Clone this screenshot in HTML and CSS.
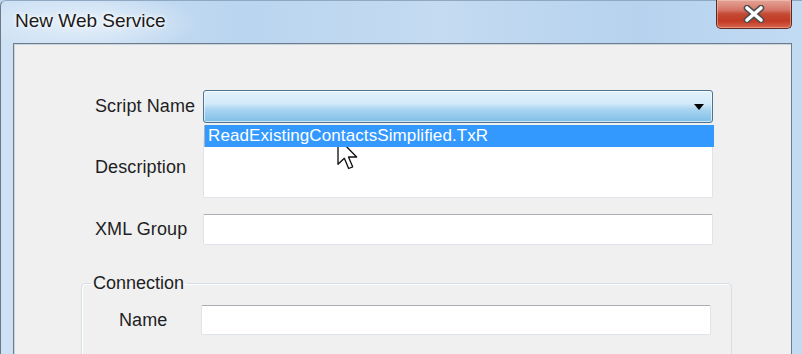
FILE: index.html
```html
<!DOCTYPE html>
<html lang="en">
<head>
    <meta charset="UTF-8">
    <title>New Web Service</title>
    <link rel="stylesheet" href="styles.css">
</head>
<body>
    <div class="window">
        <div class="titlebar">
            <span class="title">New Web Service</span>
            <div class="close-button">
                <svg width="24" height="18" viewBox="0 0 24 18">
                    <path d="M5 3 L19 15 M19 3 L5 15" stroke="#4d4d4d" stroke-width="6.5" stroke-linecap="round"/>
                    <path d="M5 3 L19 15 M19 3 L5 15" stroke="#ffffff" stroke-width="3.6" stroke-linecap="round"/>
                </svg>
            </div>
        </div>

        <div class="client">
            <div class="form">
                <div class="row row-combo">
                    <label>Script Name</label>
                    <div class="combo">
                        <span class="combo-arrow"></span>
                        <!-- open dropdown list -->
                        <ul class="dropdown">
                            <li class="selected">ReadExistingContactsSimplified.TxR</li>
                        </ul>
                    </div>
                </div>
                <div class="row row-description">
                    <label>Description</label>
                    <div class="textbox textarea"></div>
                </div>
                <div class="row row-xml">
                    <label>XML Group</label>
                    <div class="textbox"></div>
                </div>
            </div>

            <fieldset class="group">
                <legend>Connection</legend>
                <div class="row row-name">
                    <label>Name</label>
                    <div class="textbox"></div>
                </div>
            </fieldset>
        </div>
    </div>

    <!-- mouse pointer over the list -->
    <svg class="pointer" width="21" height="34" viewBox="0 0 12.6 20.4">
        <path d="M0.6 0.6 L0.6 16.4 L4.4 12.8 L7 18.9 L9.4 17.9 L6.9 12 L11.8 12 Z" fill="#ffffff" stroke="#111111" stroke-width="0.8" stroke-linejoin="round"/>
    </svg>
</body>
</html>
```

FILE: styles.css
```css
/* Windows 7 style dialog */
body {
    margin: 0;
    background: #bcd6ef;
    font-family: 'Liberation Sans', Arial, sans-serif;
    overflow: hidden;
}

.window {
    width: 802px;
    height: 354px;
    box-sizing: border-box;
    padding: 0 10px 0 12px;
    border-left: 1px solid #6c7a86;
    border-top: 1px solid #90a9c2;
    border-top-left-radius: 6px;
    background:
        radial-gradient(ellipse 110px 30px at 90px 22px, rgba(255, 255, 255, 0.55), rgba(255, 255, 255, 0) 100%),
        linear-gradient(90deg, #cfe2f5 0%, #bad5ef 30%, #c4dbf1 55%, #b6d2ee 80%, #c2dbf3 100%);
    display: flex;
    flex-direction: column;
}

.titlebar {
    height: 42px;
    flex-shrink: 0;
    display: flex;
    justify-content: space-between;
    align-items: flex-start;
}

.title {
    margin: 9px 0 0 2px;
    font-size: 19px;
    color: #1b1b1b;
    text-shadow: 0 0 6px #ffffff, 0 0 3px #ffffff;
}

.close-button {
    width: 74px;
    height: 28px;
    margin-top: -1px;
    border: 1px solid #5e2b22;
    border-top: none;
    border-radius: 0 0 5px 5px;
    background: linear-gradient(#e4a497 0%, #d5776a 35%, #c44a34 50%, #c23a24 75%, #d8654c 100%);
    box-shadow: inset 0 0 0 1px rgba(255, 210, 200, 0.45);
    display: flex;
    align-items: center;
    justify-content: center;
}

.client {
    flex: 1;
    background: #f0f0f0;
    border: 1px solid #6f7d8a;
    border-bottom: none;
    box-shadow: inset 1px 1px 0 #c9d4de;
    padding: 46px 0 0 81px;
}

.row {
    display: grid;
    grid-template-columns: 108px 510px;
    align-items: center;
}

label {
    font-size: 18px;
    letter-spacing: 0.1px;
    color: #1e1e24;
}

.combo {
    position: relative;
    height: 31px;
    border: 1px solid #4e7390;
    border-radius: 3px;
    background: linear-gradient(#e4f2fb 0%, #d2eaf9 40%, #a9d4f1 60%, #7fbfe7 100%);
    box-shadow: inset 0 0 0 1px rgba(255, 255, 255, 0.6);
}

.combo-arrow {
    position: absolute;
    right: 8px;
    top: 13px;
    border-left: 5px solid transparent;
    border-right: 5px solid transparent;
    border-top: 6px solid #000000;
}

.dropdown {
    position: absolute;
    top: 34px;
    left: 0;
    width: 509px;
    margin: 0;
    padding: 0;
    list-style-type: none;
    border-left: 1px solid #a8b4c0;
    z-index: 2;
}

.dropdown li {
    height: 22px;
    line-height: 22px;
    padding-left: 3px;
    font-size: 17px;
    letter-spacing: 0.1px;
}

.dropdown .selected {
    background: #3399ff;
    color: #ffffff;
}

.textbox {
    height: 29px;
    background: #ffffff;
    border: 1px solid #dfe4ea;
    border-top-color: #abadb3;
    border-radius: 2px;
}

.row-description {
    margin-top: 14px;
}

.row-description .textarea {
    height: 59px;
}

.row-xml {
    margin-top: 16px;
}

.group {
    box-sizing: border-box;
    width: 651px;
    margin: 28px 0 0 -14px;
    padding: 12px 0 30px 37px;
    border: 1px solid #d5dfe5;
    border-radius: 4px;
    box-shadow: inset 1px 1px 0 #ffffff;
}

.group legend {
    padding: 0 2px;
    margin-left: -28px;
    font-size: 18px;
    line-height: 20px;
    color: #1e1e24;
}

.row-name {
    grid-template-columns: 82px 510px;
}

.row-name .textbox {
    height: 28px;
}

.pointer {
    position: absolute;
    left: 337px;
    top: 137px;
}
```
